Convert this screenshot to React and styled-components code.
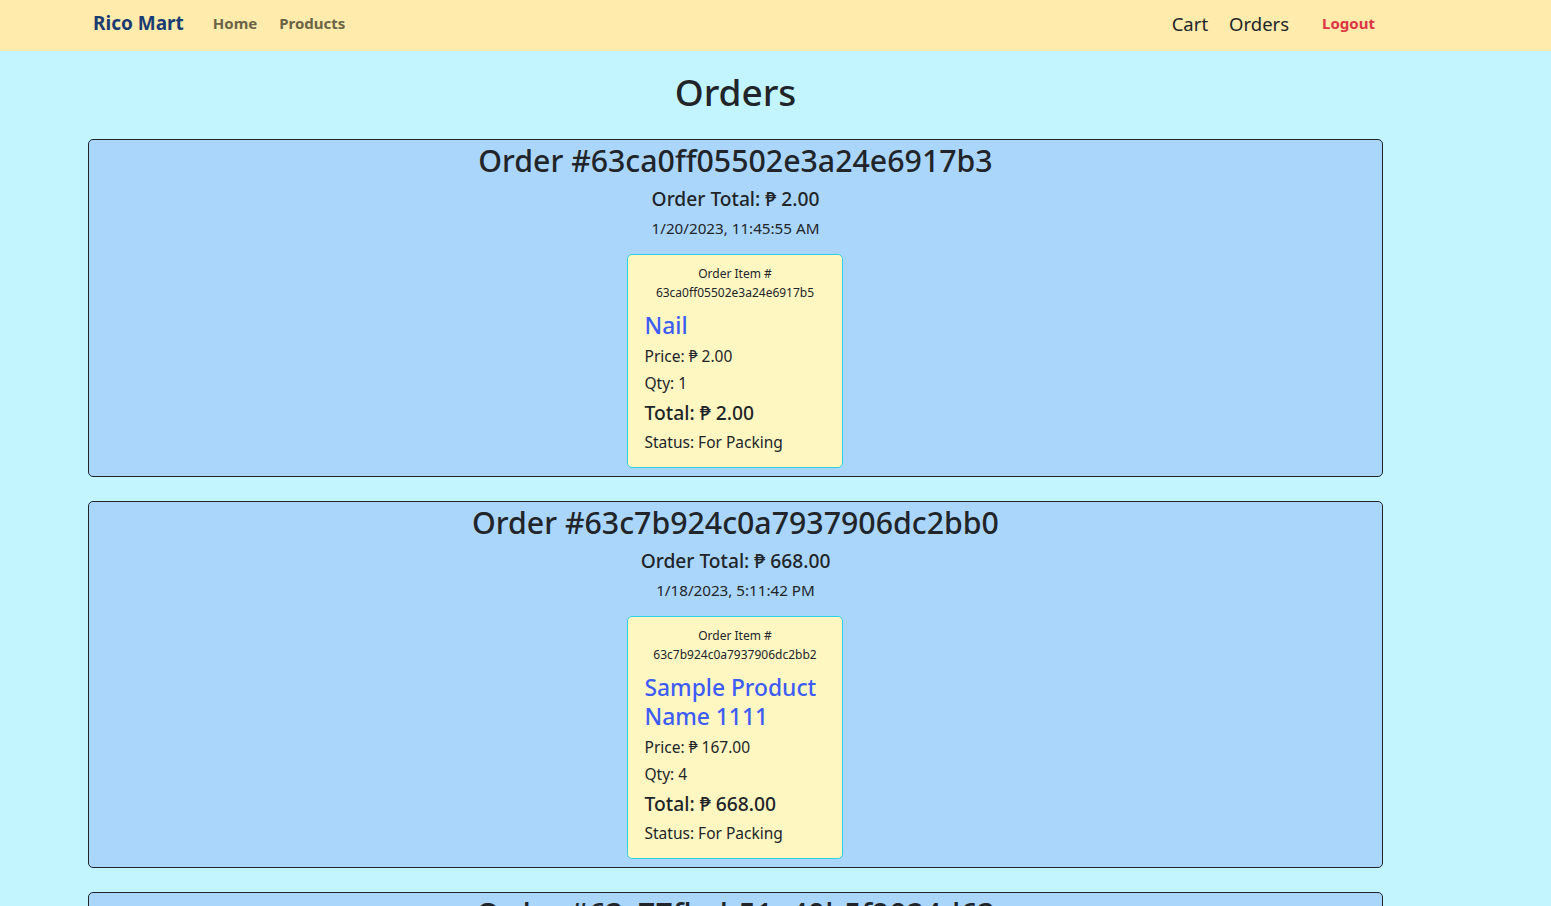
import React from "react";
import styled, { createGlobalStyle } from "styled-components";

const GlobalStyle = createGlobalStyle`
  html, body {
    margin: 0;
    padding: 0;
    background: #c2f5ff;
    font-family: "Noto Sans", "Open Sans", sans-serif;
    color: #212529;
  }
  * { box-sizing: border-box; }
`;

const orders = [
  {
    id: "63ca0ff05502e3a24e6917b3",
    total: "2.00",
    date: "1/20/2023, 11:45:55 AM",
    items: [
      {
        id: "63ca0ff05502e3a24e6917b5",
        name: "Nail",
        price: "2.00",
        qty: 1,
        total: "2.00",
        status: "For Packing",
      },
    ],
  },
  {
    id: "63c7b924c0a7937906dc2bb0",
    total: "668.00",
    date: "1/18/2023, 5:11:42 PM",
    items: [
      {
        id: "63c7b924c0a7937906dc2bb2",
        name: "Sample Product Name 1111",
        price: "167.00",
        qty: 4,
        total: "668.00",
        status: "For Packing",
      },
    ],
  },
  {
    id: "63c77fbeb51e40b5f9024d63",
    total: "120.00",
    date: "1/18/2023, 1:02:10 PM",
    items: [],
  },
];

const App = () => {
  return (
    <>
      <GlobalStyle />
      <Navbar>
        <NavLeft>
          <Brand>Rico Mart</Brand>
          <NavLink>Home</NavLink>
          <NavLink>Products</NavLink>
        </NavLeft>
        <NavRight>
          <PlainLink>Cart</PlainLink>
          <PlainLink>Orders</PlainLink>
          <Logout>Logout</Logout>
        </NavRight>
      </Navbar>
      <Main>
        <PageTitle>Orders</PageTitle>
        {orders.map((order) => (
          <OrderCard key={order.id}>
            <OrderTitle>Order #{order.id}</OrderTitle>
            <OrderTotal>Order Total: ₱ {order.total}</OrderTotal>
            <OrderDate>{order.date}</OrderDate>
            <Items>
              {order.items.map((item) => (
                <ItemCard key={item.id}>
                  <ItemId>
                    Order Item #
                    <br />
                    {item.id}
                  </ItemId>
                  <ItemName>{item.name}</ItemName>
                  <Line>Price: ₱ {item.price}</Line>
                  <Line>Qty: {item.qty}</Line>
                  <ItemTotal>Total: ₱ {item.total}</ItemTotal>
                  <Line>Status: {item.status}</Line>
                </ItemCard>
              ))}
            </Items>
          </OrderCard>
        ))}
      </Main>
    </>
  );
};

const Navbar = styled.nav`
  height: 51px;
  background: #ffebab;
  display: flex;
  align-items: center;
  justify-content: space-between;
  padding: 0 176px 5px 93px;
`;

const NavLeft = styled.div`
  display: flex;
  align-items: center;
  gap: 22px;
`;

const NavRight = styled.div`
  display: flex;
  align-items: center;
`;

const Brand = styled.span`
  font-size: 19px;
  font-weight: 700;
  color: #1b3c72;
  margin-right: 7px;
`;

const NavLink = styled.span`
  font-size: 15px;
  font-weight: 700;
  color: #6a6446;
`;

const PlainLink = styled.span`
  font-size: 18.5px;
  color: #212529;
  margin-left: 21px;
`;

const Logout = styled.span`
  font-size: 15px;
  font-weight: 700;
  color: #dc3545;
  margin-left: 33px;
`;

const Main = styled.main`
  width: 1295px;
  margin-left: 88px;
  padding-top: 17px;
  padding-bottom: 40px;
`;

const PageTitle = styled.h1`
  margin: 0 0 24px;
  font-size: 37px;
  font-weight: 500;
  line-height: 47px;
  text-align: center;
`;

const OrderCard = styled.section`
  background: #abd6fb;
  border: 1px solid #212529;
  border-radius: 5px;
  padding: 2px 16px 8px;
  margin-bottom: 24px;
  text-align: center;
`;

const OrderTitle = styled.h2`
  margin: 0 0 7px;
  font-size: 30.3px;
  font-weight: 500;
  line-height: 38px;
`;

const OrderTotal = styled.h5`
  margin: 0 0 5px;
  font-size: 19.2px;
  font-weight: 500;
  line-height: 24px;
`;

const OrderDate = styled.p`
  margin: 0 0 14px;
  font-size: 15.2px;
  line-height: 24px;
`;

const Items = styled.div`
  display: flex;
  justify-content: center;
  gap: 16px;
`;

const ItemCard = styled.div`
  width: 216px;
  margin-left: -2px;
  background: #fff7c2;
  border: 1px solid #2fcfe6;
  border-radius: 5px;
  padding: 9px 16px 10px 17px;
  text-align: left;
`;

const ItemId = styled.div`
  font-size: 12px;
  line-height: 19px;
  text-align: center;
  margin-bottom: 9px;
`;

const ItemName = styled.h3`
  margin: 0 0 4px;
  font-size: 22.8px;
  font-weight: 500;
  line-height: 29px;
  color: #3d5cf5;
`;

const Line = styled.p`
  margin: 0 0 3px;
  font-size: 15.5px;
  line-height: 24px;
`;

const ItemTotal = styled.h5`
  margin: 6px 0 5px;
  font-size: 19.3px;
  font-weight: 500;
  line-height: 24px;
`;

export default App;
